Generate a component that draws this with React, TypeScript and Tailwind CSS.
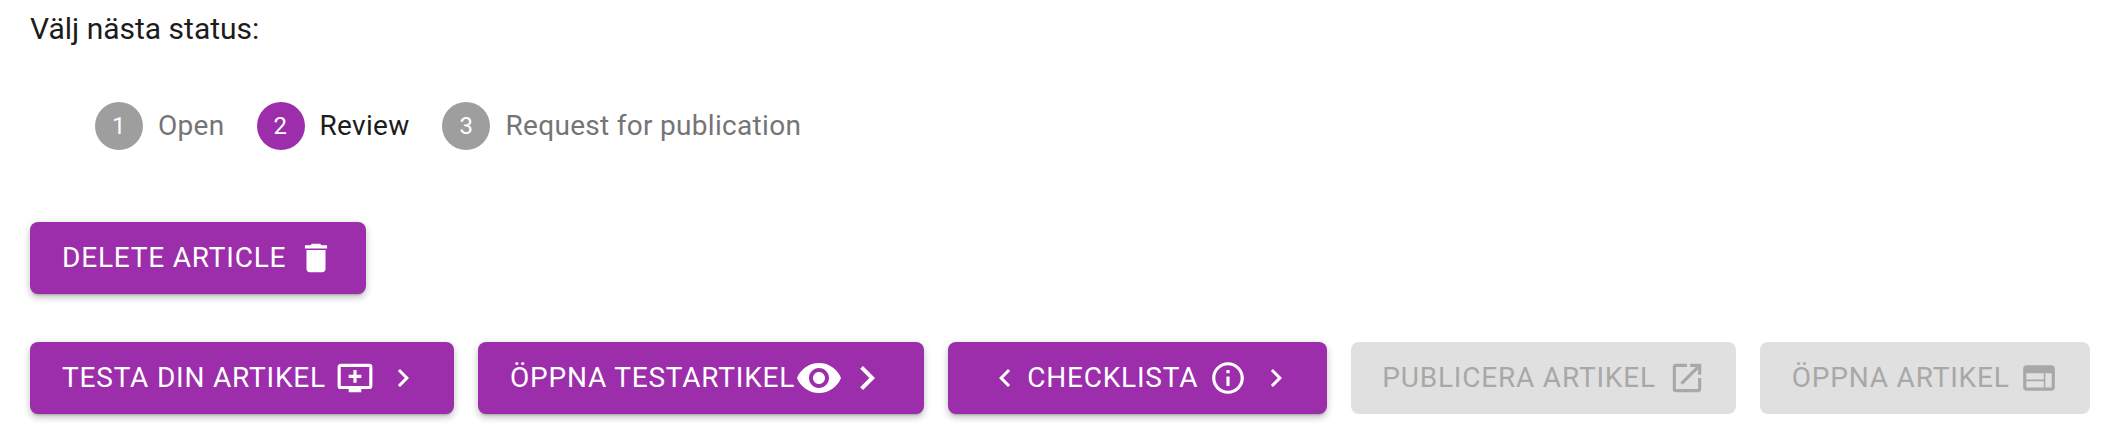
import React from 'react';
import { MdDelete, MdAddToQueue, MdRemoveRedEye, MdInfoOutline, MdOpenInNew, MdWeb, MdChevronLeft, MdChevronRight } from 'react-icons/md';

const btn =
  "h-[72px] flex items-center rounded-lg text-[28px] font-normal uppercase tracking-[0.8px] whitespace-nowrap";
const active = "bg-[#9c2dab] text-white shadow-[0_3px_2px_-2px_rgba(0,0,0,0.2),0_4px_6px_0_rgba(0,0,0,0.14),0_2px_10px_0_rgba(0,0,0,0.12)]";
const disabled = "bg-[#e0e0e0] text-[#a8a8a8]";

const App = () => {
  return (
    <div className="h-[435px] bg-white pl-[30px] pt-[9px] font-['Roboto',sans-serif] text-[28px] text-[#1c1c1c]">
      <p className="text-[30px] leading-[40px]">Välj nästa status:</p>

      <div className="mt-[53px] flex items-center pl-[65px]">
        <div className="mr-[32px] flex items-center gap-[15px] tracking-[0.3px]">
          <span className="flex h-12 w-12 items-center justify-center rounded-full bg-[#9e9e9e] text-[24px] text-white">1</span>
          <span className="text-[#757575]">Open</span>
        </div>
        <div className="mr-[33px] flex items-center gap-[15px] tracking-[0.3px]">
          <span className="flex h-12 w-12 items-center justify-center rounded-full bg-[#9c2dab] text-[24px] text-white">2</span>
          <span className="text-[#1c1c1c]">Review</span>
        </div>
        <div className="flex items-center gap-[15px] tracking-[0.3px]">
          <span className="flex h-12 w-12 items-center justify-center rounded-full bg-[#9e9e9e] text-[24px] text-white">3</span>
          <span className="text-[#757575]">Request for publication</span>
        </div>
      </div>

      <button className={`${btn} ${active} mt-[72px] pl-8 pr-[31px]`}>
        Delete Article
        <MdDelete className="ml-[11px] text-[38px]" />
      </button>

      <div className="mt-[48px] flex gap-6">
        <button className={`${btn} ${active} pl-8 pr-[33px]`}>
          Testa din artikel
          <MdAddToQueue className="ml-[10px] text-[38px]" />
          <MdChevronRight className="ml-[11px] text-[36px]" />
        </button>
        <button className={`${btn} ${active} pl-8 pr-[33px]`}>
          Öppna testartikel
          <MdRemoveRedEye className="text-[48px]" />
          <MdChevronRight className="text-[48px]" />
        </button>
        <button className={`${btn} ${active} pl-8 pr-[33px]`}>
          <MdChevronLeft className="ml-[7px] mr-1 text-[36px]" />
          Checklista
          <MdInfoOutline className="ml-[11px] text-[38px]" />
          <MdChevronRight className="ml-[11px] text-[36px]" />
        </button>
        <button className={`${btn} ${disabled} pl-[31px] pr-[30px]`}>
          Publicera artikel
          <MdOpenInNew className="ml-3 text-[38px]" />
        </button>
        <button className={`${btn} ${disabled} pl-8 pr-8`}>
          Öppna artikel
          <MdWeb className="ml-[10px] text-[38px]" />
        </button>
      </div>
    </div>
  );
};

export default App;
